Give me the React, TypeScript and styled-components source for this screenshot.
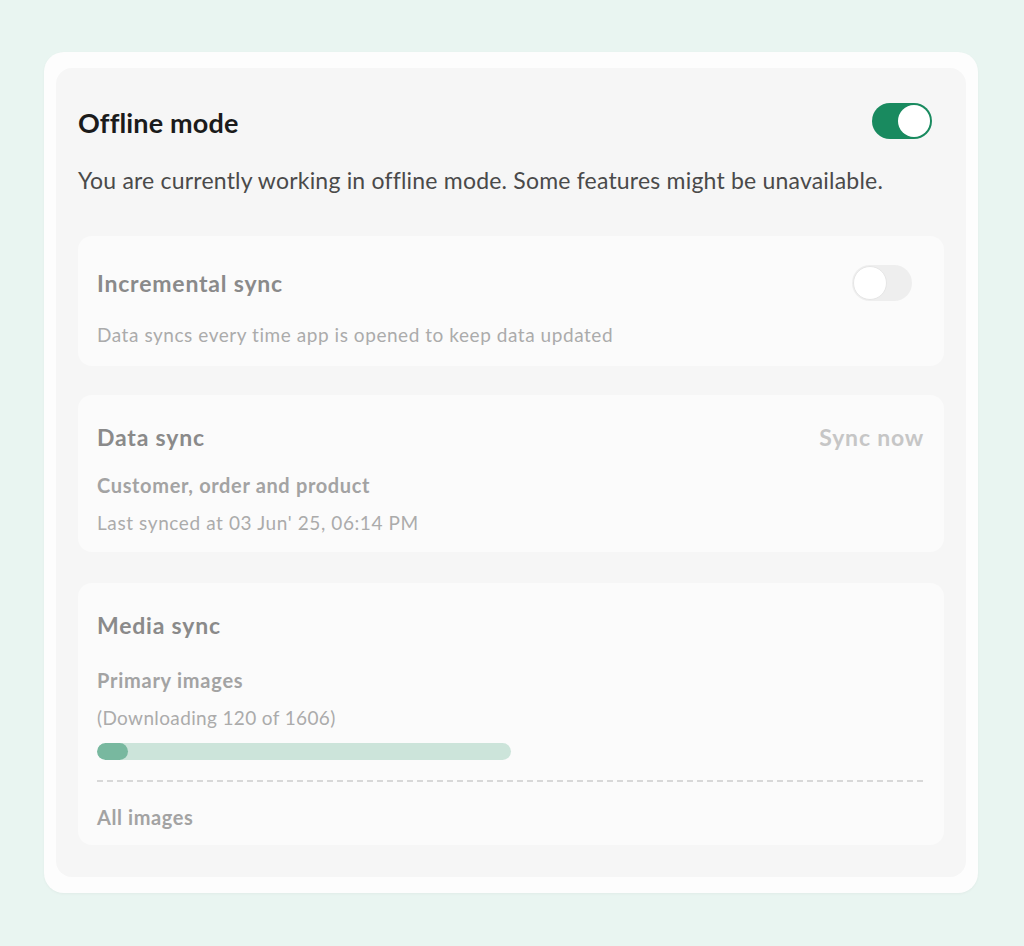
import React from "react";
import styled, { createGlobalStyle } from "styled-components";

const Global = createGlobalStyle`
  html, body { margin: 0; padding: 0; }
  body {
    background: #e9f5f1;
    font-family: "Lato", "Noto Sans", sans-serif;
    -webkit-font-smoothing: antialiased;
  }
`;

const Page = styled.div`
  width: 1024px;
  height: 946px;
  padding: 52px 46px 0 44px;
  box-sizing: border-box;
`;

const OuterCard = styled.div`
  width: 934px;
  height: 841px;
  background: #fdfdfd;
  border-radius: 20px;
  padding: 16px 12px 16px 12px;
  box-sizing: border-box;
  box-shadow: 0 1px 3px rgba(0, 0, 0, 0.04);
`;

const Panel = styled.div`
  height: 100%;
  background: #f6f6f6;
  border-radius: 16px;
  padding: 0 22px;
  box-sizing: border-box;
  display: flex;
  flex-direction: column;
`;

const HeaderRow = styled.div`
  display: flex;
  align-items: center;
  justify-content: space-between;
  margin-top: 37px;
  height: 36px;
  padding-right: 12px;
`;

const HeaderToggle = styled.div`
  margin-bottom: 4px;
`;

const Title = styled.h1`
  margin: 0;
  font-size: 27px;
  font-weight: 700;
  color: #1b1b1b;
  letter-spacing: 0.15px;
  line-height: 36px;
`;

const Description = styled.p`
  margin: 24px 0 0 0;
  font-size: 23px;
  line-height: 30px;
  color: #4a4a4a;
  font-weight: 400;
  letter-spacing: 0.2px;
`;

const Cards = styled.div`
  display: flex;
  flex-direction: column;
  margin-top: 41px;
`;

const Card = styled.div<{ $h: number; $gap: number }>`
  height: ${(p) => p.$h}px;
  margin-top: ${(p) => p.$gap}px;
  background: #fbfbfb;
  border-radius: 14px;
  padding: 0 20px 0 19px;
  box-sizing: border-box;
  display: flex;
  flex-direction: column;
`;

const CardHead = styled.div<{ $top: number; $inset?: number }>`
  display: flex;
  align-items: center;
  justify-content: space-between;
  height: 36px;
  margin-top: ${(p) => p.$top}px;
  padding-right: ${(p) => p.$inset ?? 0}px;
`;

const CardTitle = styled.div`
  font-size: 23px;
  font-weight: 700;
  color: #8a8a8a;
  letter-spacing: 0.8px;
`;

const SyncNow = styled.div`
  font-size: 23px;
  font-weight: 700;
  color: #c6c6c6;
  letter-spacing: 0.8px;
`;

const Line = styled.div<{
  $top: number;
  $size: number;
  $weight: number;
  $color: string;
  $ls: number;
}>`
  margin-top: ${(p) => p.$top}px;
  font-size: ${(p) => p.$size}px;
  font-weight: ${(p) => p.$weight};
  color: ${(p) => p.$color};
  letter-spacing: ${(p) => p.$ls}px;
  line-height: 24px;
  white-space: nowrap;
`;

const Track = styled.div<{ $on: boolean }>`
  width: 60px;
  height: 36px;
  border-radius: 18px;
  background: ${(p) => (p.$on ? "#198a5f" : "#eeeeee")};
  position: relative;
  box-sizing: border-box;
`;

const Knob = styled.div<{ $on: boolean }>`
  position: absolute;
  top: ${(p) => (p.$on ? "2px" : "1px")};
  left: ${(p) => (p.$on ? "26px" : "1px")};
  width: ${(p) => (p.$on ? "32px" : "34px")};
  height: ${(p) => (p.$on ? "32px" : "34px")};
  border-radius: 50%;
  background: #ffffff;
  box-sizing: border-box;
  border: ${(p) => (p.$on ? "none" : "1px solid #e6e6e6")};
`;

const Bar = styled.div`
  width: 414px;
  height: 17px;
  border-radius: 9px;
  background: #cce4da;
  margin-top: 13px;
  overflow: hidden;
`;

const Fill = styled.div`
  height: 100%;
  border-radius: 9px;
  background: #78b89f;
`;

const Dashed = styled.div`
  height: 1.5px;
  margin-top: 20px;
  background: repeating-linear-gradient(
    to right,
    #d8d8d8 0 6px,
    transparent 6px 10px
  );
`;

const Toggle = ({ on }: { on: boolean }) => (
  <Track $on={on}>
    <Knob $on={on} />
  </Track>
);

export default function App() {
  const fillWidth = Math.max(28, (120 / 1606) * 414);
  return (
    <>
      <Global />
      <Page>
        <OuterCard>
          <Panel>
            <HeaderRow>
              <Title>Offline mode</Title>
              <HeaderToggle>
                <Toggle on />
              </HeaderToggle>
            </HeaderRow>
            <Description>
              You are currently working in offline mode. Some features might be unavailable.
            </Description>
            <Cards>
              <Card $h={130} $gap={0}>
                <CardHead $top={29} $inset={12}>
                  <CardTitle>Incremental sync</CardTitle>
                  <Toggle on={false} />
                </CardHead>
                <Line $top={22} $size={19} $weight={400} $color="#ababab" $ls={0.55}>
                  Data syncs every time app is opened to keep data updated
                </Line>
              </Card>
              <Card $h={157} $gap={29}>
                <CardHead $top={24}>
                  <CardTitle>Data sync</CardTitle>
                  <SyncNow>Sync now</SyncNow>
                </CardHead>
                <Line $top={18} $size={20} $weight={700} $color="#a3a3a3" $ls={0.65}>
                  Customer, order and product
                </Line>
                <Line $top={14} $size={19} $weight={400} $color="#ababab" $ls={0.6}>
                  Last synced at 03 Jun' 25, 06:14 PM
                </Line>
              </Card>
              <Card $h={262} $gap={31}>
                <CardHead $top={24}>
                  <CardTitle>Media sync</CardTitle>
                </CardHead>
                <Line $top={25} $size={20} $weight={700} $color="#a3a3a3" $ls={0.75}>
                  Primary images
                </Line>
                <Line $top={14} $size={19} $weight={400} $color="#ababab" $ls={0.36}>
                  (Downloading 120 of 1606)
                </Line>
                <Bar>
                  <Fill style={{ width: `${fillWidth}px` }} />
                </Bar>
                <Dashed />
                <Line $top={23} $size={20} $weight={700} $color="#a3a3a3" $ls={0.6}>
                  All images
                </Line>
              </Card>
            </Cards>
          </Panel>
        </OuterCard>
      </Page>
    </>
  );
}
